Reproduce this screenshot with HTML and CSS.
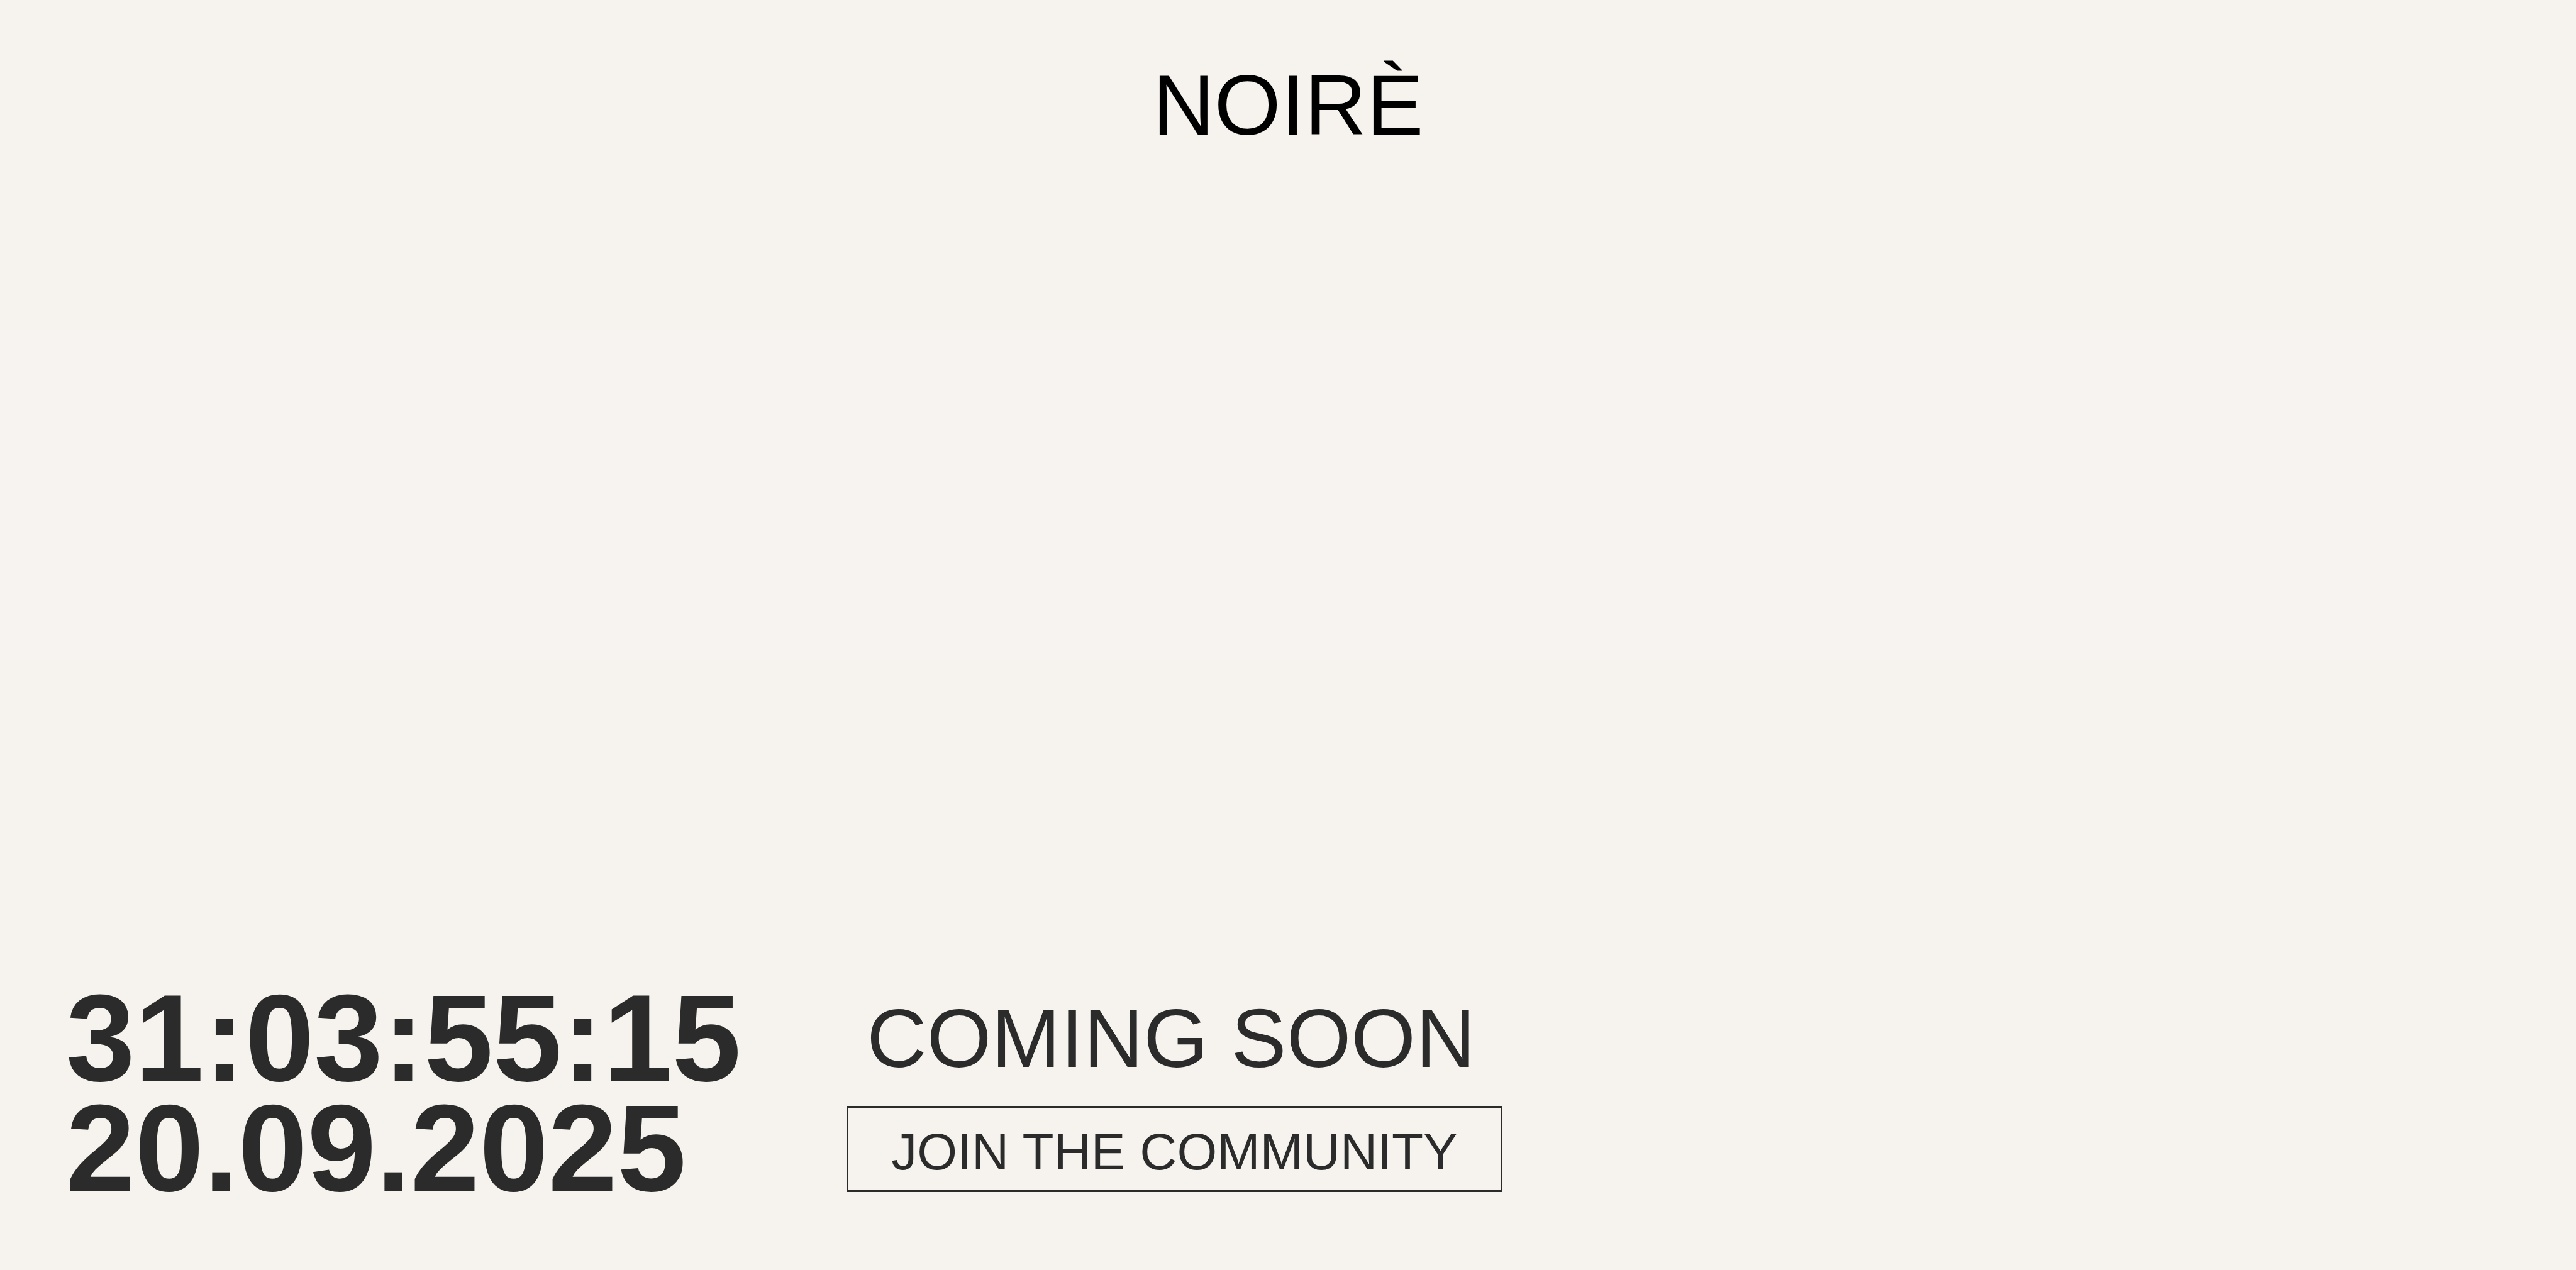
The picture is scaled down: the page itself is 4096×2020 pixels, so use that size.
FILE: index.html
```html
<!DOCTYPE html>
<html lang="en">
<head>
<meta charset="utf-8">
<meta name="viewport" content="width=device-width, initial-scale=1">
<title>NOIRÈ</title>
<link rel="stylesheet" href="styles.css">
</head>
<body class="page">
<header class="header">
<h1 class="logo">NOIRÈ</h1>
</header>
<main class="launch">
<div class="countdown">
<div role="timer">31:03:55:15</div>
<time datetime="2025-09-20">20.09.2025</time>
</div>
<div class="cta">
<p class="cta-title">COMING SOON</p>
<button class="cta-button" type="button">JOIN THE COMMUNITY</button>
</div>
</main>
</body>
</html>
```
FILE: styles.css
```css
* {
  box-sizing: border-box;
}

.page {
  display: flex;
  flex-direction: column;
  justify-content: space-between;
  min-height: 100vh;
  margin: 0;
  color: #2b2b2b;
  background: linear-gradient(#f6f3ee 26%, #f7f3f0 26% 52%, #f6f3ee 52%);
  font-family: "Liberation Sans", Helvetica, Arial, sans-serif;
}

.header {
  padding-top: 99px;
  text-align: center;
}

.logo {
  margin: 0;
  color: #000;
  font-size: 136px;
  font-weight: 400;
  line-height: 136px;
}

.launch {
  display: flex;
  flex-wrap: wrap;
  align-items: flex-end;
  gap: 40px 168px;
  padding: 0 105px 106px;
}

.countdown {
  display: flex;
  flex-direction: column;
  font-size: 197px;
  font-weight: 700;
  line-height: 175px;
}

.cta {
  display: flex;
  flex-direction: column;
  gap: 41px;
  padding-bottom: 18px;
}

.cta-title {
  margin: 0;
  padding-left: 32px;
  font-size: 132px;
  line-height: 132px;
}

.cta-button {
  padding: 29px 68px 20px;
  border: 3px solid #2b2b2b;
  border-radius: 0;
  color: inherit;
  background: transparent;
  font-family: inherit;
  font-size: 82px;
  line-height: 82px;
  cursor: pointer;
}
```
